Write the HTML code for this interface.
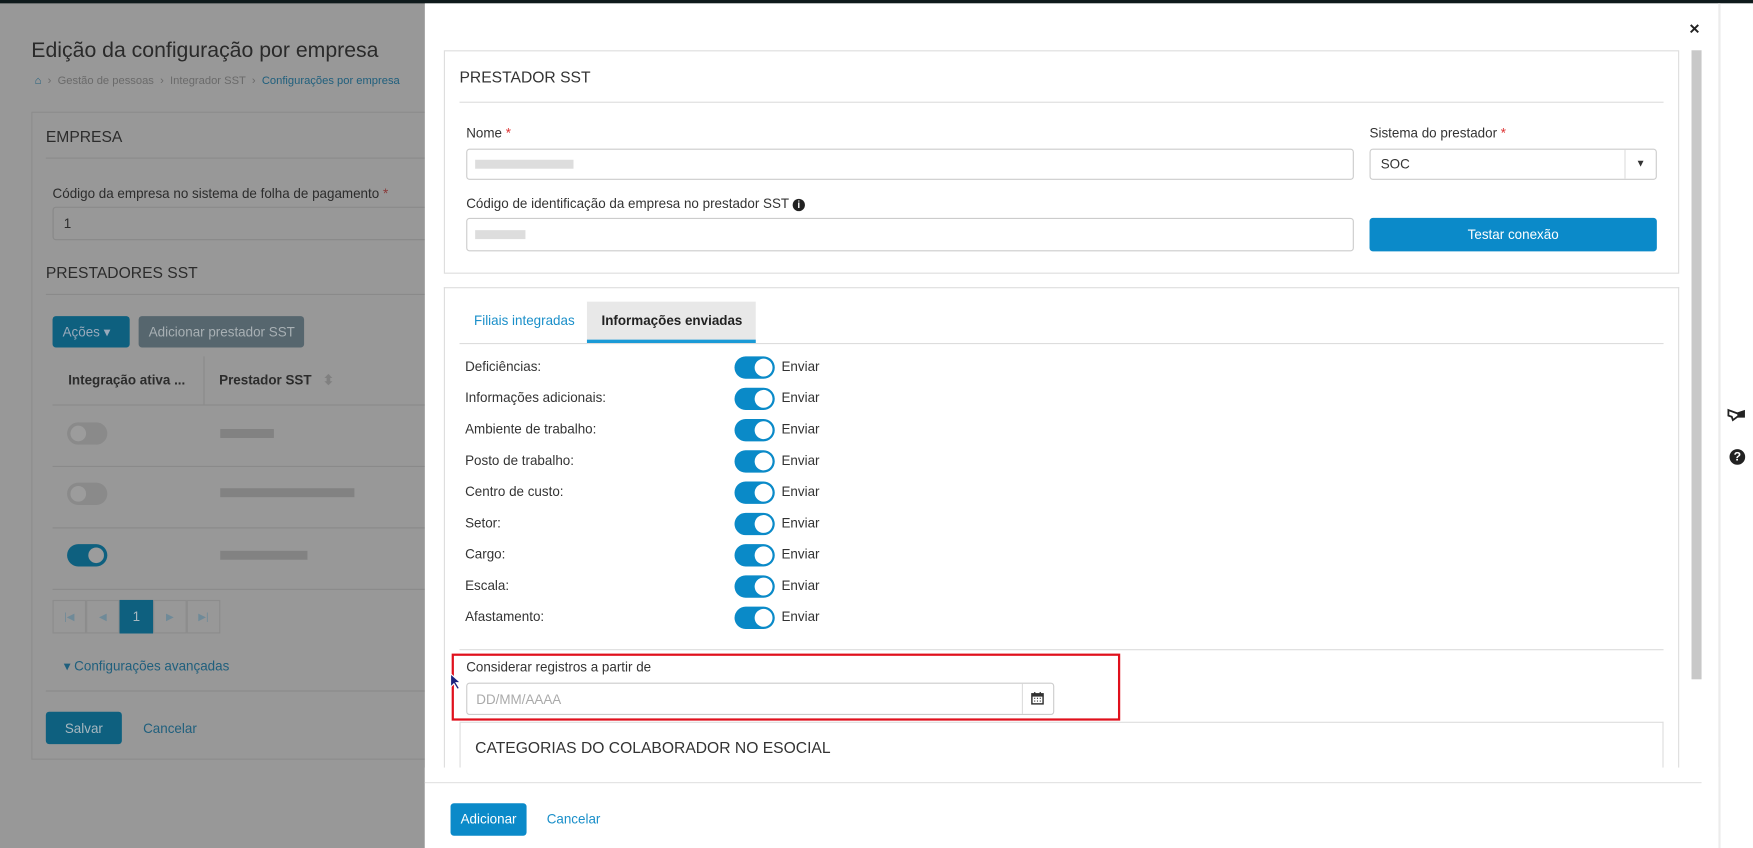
<!DOCTYPE html>
<html><head><meta charset="utf-8"><style>
*{box-sizing:border-box;margin:0;padding:0}
html,body{width:1753px;height:848px;overflow:hidden;background:#989898;font-family:"Liberation Sans",sans-serif}
#w{position:absolute;left:0;top:0;width:1568px;height:759px;transform:scale(1.11798,1.11726);transform-origin:0 0;background:#989898}
.a{position:absolute}
.t{font-size:12px;color:#333;white-space:nowrap}
.bg .t{color:#2c2c2c}
.inp{position:absolute;border:1px solid #ccc;border-radius:3px;background:#fff}
.tg{position:absolute;width:36px;height:20px;border-radius:10px;background:#0a8ac8}
.tg:after{content:"";position:absolute;right:2px;top:2px;width:16px;height:16px;border-radius:50%;background:#fff}
.blur{position:absolute;height:8px;background:#7d7d7d;opacity:.8}
.pg{position:absolute;top:537px;width:30px;height:30px;border:1px solid #8c8c8c;color:#6f8a98;font-size:9px;text-align:center;line-height:28px}
</style></head><body><div id="w">
<div class="a" style="left:0;top:0;width:1568px;height:3px;background:#0f1a1c"></div>
<div class="bg">
<div class="a t" style="left:28px;top:35px;font-size:19px;color:#2a2a2a">Edição da configuração por empresa</div>
<div class="a t" style="left:31px;top:67px;font-size:10px;color:#6a6a6a"><span style="color:#1f5f7d">&#8962;</span> &nbsp;›&nbsp; Gestão de pessoas &nbsp;›&nbsp; Integrador SST &nbsp;›&nbsp; <span style="color:#1f5f7d">Configurações por empresa</span></div>
<div class="a" style="left:28px;top:100px;width:360px;height:580px;border:1px solid #8c8c8c"></div>
<div class="a t" style="left:41px;top:114px;font-size:14px">EMPRESA</div>
<div class="a" style="left:41px;top:141px;width:340px;height:1px;background:#8a8a8a"></div>
<div class="a t" style="left:47px;top:166px">Código da empresa no sistema de folha de pagamento <span style="color:#8a3a3a">*</span></div>
<div class="a" style="left:47px;top:185px;width:340px;height:30px;border:1px solid #888;border-radius:3px"></div>
<div class="a t" style="left:57px;top:193px">1</div>
<div class="a t" style="left:41px;top:236px;font-size:14px">PRESTADORES SST</div>
<div class="a" style="left:41px;top:263px;width:340px;height:1px;background:#8a8a8a"></div>
<div class="a" style="left:47px;top:283px;width:69px;height:28px;background:#0e607f;border-radius:3px"></div>
<div class="a t" style="left:56px;top:290px;color:#9ab">Ações ▾</div>
<div class="a" style="left:124px;top:283px;width:148px;height:28px;background:#56666e;border-radius:3px"></div>
<div class="a t" style="left:133px;top:290px;color:#a8b0b4">Adicionar prestador SST</div>
<div class="a t" style="left:61px;top:333px;font-weight:bold">Integração ativa ...</div>
<div class="a" style="left:182px;top:319px;width:1px;height:43px;background:#8a8a8a"></div>
<div class="a t" style="left:196px;top:333px;font-weight:bold">Prestador SST <span style="color:#808080">&nbsp; ⬍</span></div>
<div class="a" style="left:47px;top:362px;width:340px;height:1px;background:#8a8a8a"></div>
<div class="a" style="left:47px;top:417px;width:340px;height:1px;background:#8a8a8a"></div>
<div class="a" style="left:47px;top:472px;width:340px;height:1px;background:#8a8a8a"></div>
<div class="a" style="left:47px;top:527px;width:340px;height:1px;background:#8a8a8a"></div>
<div class="a" style="left:60px;top:378px;width:36px;height:20px;border-radius:10px;background:#8a8a8a"><div class="a" style="left:3px;top:3px;width:14px;height:14px;border-radius:50%;background:#9c9c9c"></div></div>
<div class="a" style="left:60px;top:432px;width:36px;height:20px;border-radius:10px;background:#8a8a8a"><div class="a" style="left:3px;top:3px;width:14px;height:14px;border-radius:50%;background:#9c9c9c"></div></div>
<div class="a" style="left:60px;top:487px;width:36px;height:20px;border-radius:10px;background:#0e607f"><div class="a" style="right:3px;top:3px;width:14px;height:14px;border-radius:50%;background:#9c9c9c"></div></div>
<div class="blur" style="left:197px;top:384px;width:48px"></div>
<div class="blur" style="left:197px;top:437px;width:120px"></div>
<div class="blur" style="left:197px;top:493px;width:78px"></div>
<div class="pg" style="left:47px">|◀</div>
<div class="pg" style="left:77px">◀</div>
<div class="pg" style="left:107px;background:#0e607f;border-color:#0e607f;color:#a8b8c0;font-size:12px">1</div>
<div class="pg" style="left:137px">▶</div>
<div class="pg" style="left:167px">▶|</div>
<div class="a t" style="left:57px;top:589px;color:#1f5f7d">▾ Configurações avançadas</div>
<div class="a" style="left:41px;top:618px;width:340px;height:1px;background:#8a8a8a"></div>
<div class="a" style="left:41px;top:637px;width:68px;height:29px;background:#0e607f;border-radius:3px"></div>
<div class="a t" style="left:58px;top:645px;color:#a8b8c0">Salvar</div>
<div class="a t" style="left:128px;top:645px;color:#1f5f7d">Cancelar</div>
</div>
<div class="a" style="left:380px;top:3px;width:1158px;height:756px;background:#fff"></div>
<div class="a" style="left:1537px;top:3px;width:31px;height:756px;background:#fff;border-left:2px solid #ececec"></div>
<div class="a t" style="left:1511px;top:18px;font-size:16px;font-weight:bold;color:#222">×</div>
<div class="a" style="left:1513px;top:45px;width:9px;height:563px;background:#c8c8c8"></div>
<svg class="a" style="left:1545px;top:364px" width="16" height="16" viewBox="0 0 16 16"><path d="M1 3 L9 6 L15 4 L15 9 L9 9 L5 12 L4 9 L1 8 Z" fill="none" stroke="#222" stroke-width="1.6"/><path d="M9 6 L15 4 L15 9 L9 9Z" fill="#222"/></svg>
<div class="a" style="left:1547px;top:402px;width:14px;height:14px;border-radius:50%;background:#222;color:#fff;font-size:11px;font-weight:bold;text-align:center;line-height:14px">?</div>

<div class="a" style="left:397px;top:45px;width:1105px;height:200px;border:1px solid #ddd"></div>
<div class="a t" style="left:411px;top:61px;font-size:14px">PRESTADOR SST</div>
<div class="a" style="left:411px;top:91px;width:1077px;height:1px;background:#ddd"></div>
<div class="a t" style="left:417px;top:112px">Nome <span style="color:#d33">*</span></div>
<div class="inp" style="left:417px;top:133px;width:794px;height:28px"></div>
<div class="a" style="left:425px;top:143px;width:88px;height:8px;background:#ddd"></div>
<div class="a t" style="left:1225px;top:112px">Sistema do prestador <span style="color:#d33">*</span></div>
<div class="inp" style="left:1225px;top:133px;width:257px;height:28px"></div>
<div class="a" style="left:1453px;top:134px;width:1px;height:26px;background:#ddd"></div>
<div class="a t" style="left:1235px;top:140px">SOC</div>
<div class="a t" style="left:1463px;top:141px;font-size:9px">▼</div>
<div class="a t" style="left:417px;top:175px">Código de identificação da empresa no prestador SST <span style="display:inline-block;width:11px;height:11px;border-radius:50%;background:#222;color:#fff;font-size:9px;text-align:center;line-height:11px;font-weight:bold">i</span></div>
<div class="inp" style="left:417px;top:195px;width:794px;height:30px"></div>
<div class="a" style="left:425px;top:206px;width:45px;height:8px;background:#ddd"></div>
<div class="a" style="left:1225px;top:195px;width:257px;height:30px;background:#0b8ac9;border-radius:3px;color:#fff;font-size:12px;text-align:center;line-height:30px">Testar conexão</div>

<div class="a" style="left:397px;top:257px;width:1105px;height:440px;border:1px solid #ddd;border-bottom:none"></div>
<div class="a t" style="left:424px;top:280px;color:#1a8fc9">Filiais integradas</div>
<div class="a" style="left:525px;top:270px;width:151px;height:37px;background:#e8e8e8;border-bottom:3px solid #1a9ad6"></div>
<div class="a t" style="left:538px;top:280px;font-weight:bold;color:#222">Informações enviadas</div>
<div class="a" style="left:411px;top:307px;width:1077px;height:1px;background:#ddd"></div>

<div class="a t" style="left:416px;top:321px">Deficiências:</div>
<div class="a t" style="left:416px;top:349px">Informações adicionais:</div>
<div class="a t" style="left:416px;top:377px">Ambiente de trabalho:</div>
<div class="a t" style="left:416px;top:405px">Posto de trabalho:</div>
<div class="a t" style="left:416px;top:433px">Centro de custo:</div>
<div class="a t" style="left:416px;top:461px">Setor:</div>
<div class="a t" style="left:416px;top:489px">Cargo:</div>
<div class="a t" style="left:416px;top:517px">Escala:</div>
<div class="a t" style="left:416px;top:545px">Afastamento:</div>
<div class="tg" style="left:657px;top:319px"></div><div class="a t" style="left:699px;top:321px">Enviar</div>
<div class="tg" style="left:657px;top:347px"></div><div class="a t" style="left:699px;top:349px">Enviar</div>
<div class="tg" style="left:657px;top:375px"></div><div class="a t" style="left:699px;top:377px">Enviar</div>
<div class="tg" style="left:657px;top:403px"></div><div class="a t" style="left:699px;top:405px">Enviar</div>
<div class="tg" style="left:657px;top:431px"></div><div class="a t" style="left:699px;top:433px">Enviar</div>
<div class="tg" style="left:657px;top:459px"></div><div class="a t" style="left:699px;top:461px">Enviar</div>
<div class="tg" style="left:657px;top:487px"></div><div class="a t" style="left:699px;top:489px">Enviar</div>
<div class="tg" style="left:657px;top:515px"></div><div class="a t" style="left:699px;top:517px">Enviar</div>
<div class="tg" style="left:657px;top:543px"></div><div class="a t" style="left:699px;top:545px">Enviar</div>

<div class="a" style="left:411px;top:581px;width:1077px;height:1px;background:#ddd"></div>
<div class="a" style="left:404px;top:585px;width:598px;height:60px;border:2px solid #e0101c"></div>
<div class="a t" style="left:417px;top:590px">Considerar registros a partir de</div>
<div class="inp" style="left:417px;top:611px;width:526px;height:29px"></div>
<div class="a" style="left:914px;top:612px;width:1px;height:27px;background:#ddd"></div>
<div class="a t" style="left:426px;top:619px;color:#aaa">DD/MM/AAAA</div>
<svg class="a" style="left:922px;top:619px" width="12" height="12" viewBox="0 0 12 12"><rect x="1" y="2" width="10" height="9" fill="none" stroke="#333" stroke-width="1.3"/><rect x="1" y="2" width="10" height="2.5" fill="#333"/><path d="M3 6h1M5.5 6h1M8 6h1M3 8.5h1M5.5 8.5h1M8 8.5h1" stroke="#333"/><path d="M3.5 0.5v2M8.5 0.5v2" stroke="#333" stroke-width="1.3"/></svg>
<svg class="a" style="left:402px;top:602px" width="12" height="16" viewBox="0 0 12 16"><path d="M1 1 L1 13 L4 10 L7 15 L9 14 L6 9 L10 9 Z" fill="#1a237e" stroke="#fff" stroke-width="1"/></svg>

<div class="a" style="left:411px;top:646px;width:1077px;height:45px;border:1px solid #ddd;border-bottom:none"></div>
<div class="a t" style="left:425px;top:661px;font-size:14px">CATEGORIAS DO COLABORADOR NO ESOCIAL</div>
<div class="a" style="left:380px;top:687px;width:1157px;height:72px;background:#fff"></div>
<div class="a" style="left:380px;top:700px;width:1142px;height:1px;background:#e2e2e2"></div>
<div class="a" style="left:403px;top:719px;width:68px;height:29px;background:#0b8ac9;border-radius:3px;color:#fff;font-size:12px;text-align:center;line-height:29px">Adicionar</div>
<div class="a t" style="left:489px;top:726px;color:#1a8fc9">Cancelar</div>
</div></body></html>
